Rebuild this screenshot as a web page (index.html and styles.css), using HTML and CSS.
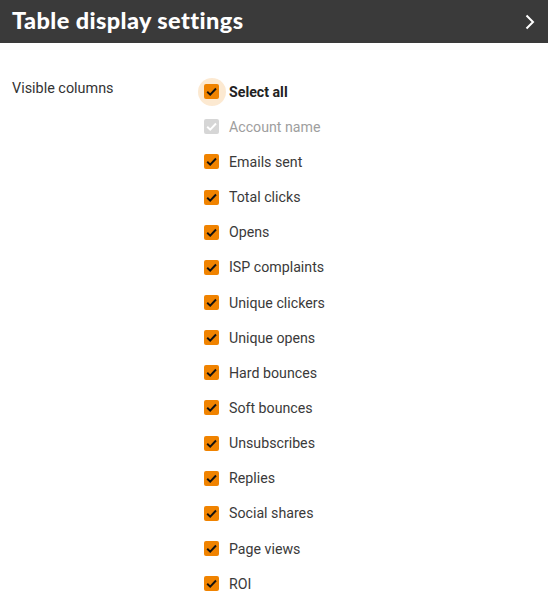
FILE: index.html
```html
<!DOCTYPE html>
<html>
<head>
<meta charset="utf-8">
<link rel="stylesheet" href="styles.css">
</head>
<body>
<header class="bar">
  <h1 class="title">Table display settings</h1>
  <svg class="chev" width="10" height="16" viewBox="0 0 10 16"><path d="M1.5 1.5 L8 8 L1.5 14.5" fill="none" stroke="#fff" stroke-width="2"/></svg>
</header>
<main class="content">
  <div class="label">Visible columns</div>
  <ul class="list">
    <li class="row bold"><span class="box halo"><svg viewBox="0 0 14 14"><path d="M3 7.2 L5.8 10 L11.2 4.2" fill="none" stroke="#111" stroke-width="1.8"/></svg></span>Select all</li>
    <li class="row disabled"><span class="box"><svg viewBox="0 0 14 14"><path d="M3 7.2 L5.8 10 L11.2 4.2" fill="none" stroke="#fff" stroke-width="1.8"/></svg></span>Account name</li>
    <li class="row"><span class="box"><svg viewBox="0 0 14 14"><path d="M3 7.2 L5.8 10 L11.2 4.2" fill="none" stroke="#111" stroke-width="1.8"/></svg></span>Emails sent</li>
    <li class="row"><span class="box"><svg viewBox="0 0 14 14"><path d="M3 7.2 L5.8 10 L11.2 4.2" fill="none" stroke="#111" stroke-width="1.8"/></svg></span>Total clicks</li>
    <li class="row"><span class="box"><svg viewBox="0 0 14 14"><path d="M3 7.2 L5.8 10 L11.2 4.2" fill="none" stroke="#111" stroke-width="1.8"/></svg></span>Opens</li>
    <li class="row"><span class="box"><svg viewBox="0 0 14 14"><path d="M3 7.2 L5.8 10 L11.2 4.2" fill="none" stroke="#111" stroke-width="1.8"/></svg></span>ISP complaints</li>
    <li class="row"><span class="box"><svg viewBox="0 0 14 14"><path d="M3 7.2 L5.8 10 L11.2 4.2" fill="none" stroke="#111" stroke-width="1.8"/></svg></span>Unique clickers</li>
    <li class="row"><span class="box"><svg viewBox="0 0 14 14"><path d="M3 7.2 L5.8 10 L11.2 4.2" fill="none" stroke="#111" stroke-width="1.8"/></svg></span>Unique opens</li>
    <li class="row"><span class="box"><svg viewBox="0 0 14 14"><path d="M3 7.2 L5.8 10 L11.2 4.2" fill="none" stroke="#111" stroke-width="1.8"/></svg></span>Hard bounces</li>
    <li class="row"><span class="box"><svg viewBox="0 0 14 14"><path d="M3 7.2 L5.8 10 L11.2 4.2" fill="none" stroke="#111" stroke-width="1.8"/></svg></span>Soft bounces</li>
    <li class="row"><span class="box"><svg viewBox="0 0 14 14"><path d="M3 7.2 L5.8 10 L11.2 4.2" fill="none" stroke="#111" stroke-width="1.8"/></svg></span>Unsubscribes</li>
    <li class="row"><span class="box"><svg viewBox="0 0 14 14"><path d="M3 7.2 L5.8 10 L11.2 4.2" fill="none" stroke="#111" stroke-width="1.8"/></svg></span>Replies</li>
    <li class="row"><span class="box"><svg viewBox="0 0 14 14"><path d="M3 7.2 L5.8 10 L11.2 4.2" fill="none" stroke="#111" stroke-width="1.8"/></svg></span>Social shares</li>
    <li class="row"><span class="box"><svg viewBox="0 0 14 14"><path d="M3 7.2 L5.8 10 L11.2 4.2" fill="none" stroke="#111" stroke-width="1.8"/></svg></span>Page views</li>
    <li class="row"><span class="box"><svg viewBox="0 0 14 14"><path d="M3 7.2 L5.8 10 L11.2 4.2" fill="none" stroke="#111" stroke-width="1.8"/></svg></span>ROI</li>
  </ul>
</main>
</body>
</html>
```
FILE: styles.css
```css
html, body { margin: 0; padding: 0; background: #fff; }
body { font-family: Roboto, "Liberation Sans", sans-serif; width: 548px; height: 615px; overflow: hidden; }
.bar {
  height: 43px;
  background: #3a3a3a;
  display: flex;
  align-items: center;
  justify-content: space-between;
  padding: 0 12px 0 12px;
  box-sizing: border-box;
}
.title {
  margin: 0;
  color: #fff;
  font-family: Lato, sans-serif;
  font-weight: 900;
  font-size: 23.5px;
  letter-spacing: 0.4px;
  line-height: 1;
  padding-bottom: 2px;
}
.chev { display: block; margin-right: 1px; }
.content {
  display: flex;
  padding: 31px 0 0 12px;
}
.label {
  width: 192px;
  font-size: 14.4px;
  color: #333;
  padding-top: 6px;
}
.list {
  list-style: none;
  margin: 0;
  padding: 0;
}
.row {
  height: 35.17px;
  display: flex;
  align-items: center;
  font-size: 14.2px;
  color: #3a3a3a;
}
.row.bold { font-weight: 700; color: #222; }
.row.disabled { color: #9e9e9e; }
.box {
  position: relative;
  width: 15px;
  height: 15px;
  border-radius: 2px;
  background: #f08300;
  margin-right: 10px;
  flex: none;
}
.box svg { position: absolute; inset: 0; width: 15px; height: 15px; }
.disabled .box { background: #d6d6d6; }
.halo::before {
  content: "";
  position: absolute;
  left: -6.5px;
  top: -6.5px;
  width: 28px;
  height: 28px;
  border-radius: 50%;
  background: rgba(240, 131, 0, 0.18);
}
```
